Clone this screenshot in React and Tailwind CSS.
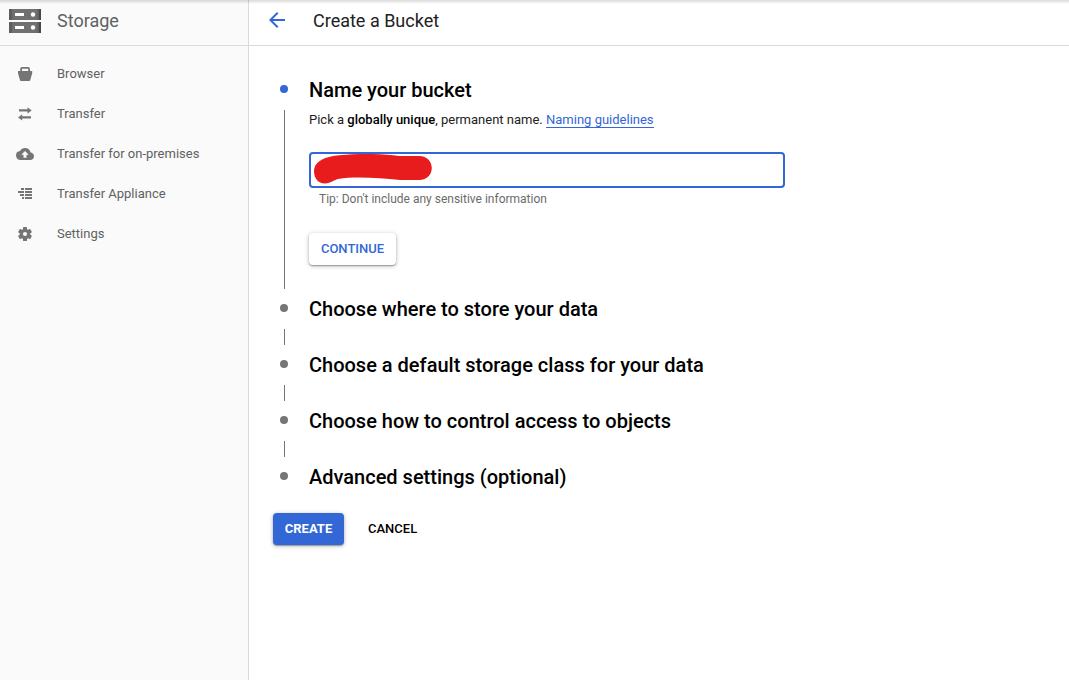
import { MdArrowBack, MdCloudUpload } from "react-icons/md";

function StorageLogo() {
  return (
    <svg width="32" height="24" viewBox="0 0 32 24" className="shrink-0">
      {[0, 13].map((y) => (
        <g key={y} transform={`translate(0 ${y})`}>
          <rect width="32" height="11" fill="#707070" />
          <rect width="3" height="11" fill="#5e5e5e" />
          <rect x="28" width="2" height="11" fill="#646464" />
          <rect x="30" width="2" height="11" fill="#484848" />
          <rect x="6" y="4" width="9" height="3" fill="#fff" />
          <circle cx="24" cy="5.5" r="2.2" fill="#fff" />
        </g>
      ))}
    </svg>
  );
}

function BucketIcon() {
  return (
    <svg width="18" height="18" viewBox="0 0 18 18" fill="#757575">
      <path
        fillRule="evenodd"
        d="M6 2h6a2 2 0 0 1 2 2v2h2.2v2.300L14.200 15.200a1 1 0 0 1-1 .8H5a1 1 0 0 1-1-.8L2 8.300V6h2.200V4A2 2 0 0 1 6 2ZM6 3.800V6h6.200V3.800Z"
      />
    </svg>
  );
}

function TransferIcon() {
  return (
    <svg width="18" height="18" viewBox="0 0 18 18" fill="#757575">
      <path d="M3 4.200h8.500V2.200l4.200 3.200-4.200 3.200V6.500H3ZM15 11.300H6.200V9.200L2 12.400l4.200 3.200v-2H15Z" />
    </svg>
  );
}

function ApplianceIcon() {
  return (
    <svg width="18" height="18" viewBox="0 0 18 18" fill="#757575" shapeRendering="crispEdges">
      <path d="M9 3h7v2H9zM9 6h7v2H9zM9 9h7v2H9zM9 12h7v2H9zM5 3h3v2H5zM2 6h6v2H2zM4 9h4v2H4zM6 12h2v2H6z" />
    </svg>
  );
}

function GearIcon() {
  return (
    <svg width="18" height="18" viewBox="0 0 18 18" fill="#757575">
      {[0, 60, 120].map((angle) => (
        <rect key={angle} x="7" y="2" width="4" height="14" rx="0.6" transform={`rotate(${angle} 9 9)`} />
      ))}
      <circle cx="9" cy="9" r="5.3" />
      <circle cx="9" cy="9" r="2.1" fill="#fafafa" />
    </svg>
  );
}

const links = [
  ["Browser", <BucketIcon />],
  ["Transfer", <TransferIcon />],
  ["Transfer for on-premises", <MdCloudUpload size={18} />],
  ["Transfer Appliance", <ApplianceIcon />],
  ["Settings", <GearIcon />],
];

function Sidebar() {
  return (
    <aside className="flex w-[249px] shrink-0 flex-col border-r border-[#dadada] bg-[#fafafa]">
      <div className="flex h-[46px] items-center gap-4 border-b border-[#dadada] pb-[3px] pl-[9px]">
        <StorageLogo />
        <span className="text-[18px] leading-6 text-[#616161]">Storage</span>
      </div>
      <nav className="pt-2">
        {links.map(([label, icon]) => (
          <a key={label} className="flex h-10 items-center gap-[23px] pl-4 text-[13px] text-[#616161]">
            <span className="text-[#757575]">{icon}</span>
            <span>{label}</span>
          </a>
        ))}
      </nav>
    </aside>
  );
}

function Step({ title, active, last, children }) {
  return (
    <section className="flex">
      <div className="flex w-[36px] shrink-0 flex-col pl-[7px]">
        <div className="flex h-8 items-center">
          <span className={`size-2 rounded-full ${active ? "bg-[#3367d6]" : "bg-[#757575]"}`} />
        </div>
        {!last && <div className="mt-[5px] mb-[3px] ml-1 w-px grow bg-[#757575]" />}
      </div>
      <div className={last ? "h-8" : active ? "h-[219px]" : "h-14"}>
        <h2 className="pt-[3px] text-[20px] leading-7 font-medium text-black">{title}</h2>
        {children}
      </div>
    </section>
  );
}

function NameForm() {
  return (
    <>
      <p className="mt-1.5 h-5 text-[13px] leading-5 text-[#212121]">
        Pick a <span className="font-medium text-black">globally unique</span>, permanent name.{" "}
        <a className="inline-block border-b border-[#3367d6] leading-[14px] text-[#3367d6]">Naming guidelines</a>
      </p>
      <div className="mt-[22px] h-9 w-[476px] rounded-[4px] border-2 border-[#3367d6] bg-white">
        <svg width="128" height="32" viewBox="311 154 128 32" className="block">
          <path
            fill="#e81c1c"
            d="M314 171C314 163 322 158 333 156C354 153 383 153.500 399 156H419C436 156 436 180 419 180H400C379 178 356 176 338 179C334 180 330 183.500 325 183.500C318 183.500 314 178 314 171Z"
          />
        </svg>
      </div>
      <p className="mt-[3px] pl-[10px] text-[12px] leading-4 text-[#6b6b6b]">Tip: Don't include any sensitive information</p>
      <button className="mt-[26px] flex h-8 w-[87px] items-center justify-center rounded-[4px] bg-white text-[13px] font-medium text-[#3367d6] shadow-[0_1px_4px_rgba(0,0,0,0.3),0_1px_1px_rgba(0,0,0,0.25)]">
        CONTINUE
      </button>
    </>
  );
}

export default function App() {
  return (
    <div className="relative flex h-[680px] w-[1069px] overflow-hidden bg-white font-[Roboto,sans-serif]">
      <div className="absolute inset-x-0 top-0 h-[4px] bg-linear-to-b from-black/15 to-transparent" />
      <Sidebar />
      <main className="flex grow flex-col">
        <header className="flex h-[46px] items-center gap-6 border-b border-[#dadada] pb-[5px] pl-4">
          <MdArrowBack size={24} className="text-[#3367d6]" />
          <h1 className="pt-0.5 text-[18px] leading-6 text-[#212121]">Create a Bucket</h1>
        </header>
        <div className="pt-[27px] pl-6">
          <Step title="Name your bucket" active>
            <NameForm />
          </Step>
          <Step title="Choose where to store your data" />
          <Step title="Choose a default storage class for your data" />
          <Step title="Choose how to control access to objects" />
          <Step title="Advanced settings (optional)" last />
          <div className="mt-[21px] flex items-center gap-6">
            <button className="h-8 w-[71px] rounded-[4px] bg-[#3367d6] text-[13px] font-bold text-white shadow-[0_1px_4px_rgba(0,0,0,0.3),0_1px_1px_rgba(0,0,0,0.25)]">
              CREATE
            </button>
            <button className="text-[13px] font-medium text-black">CANCEL</button>
          </div>
        </div>
      </main>
    </div>
  );
}
